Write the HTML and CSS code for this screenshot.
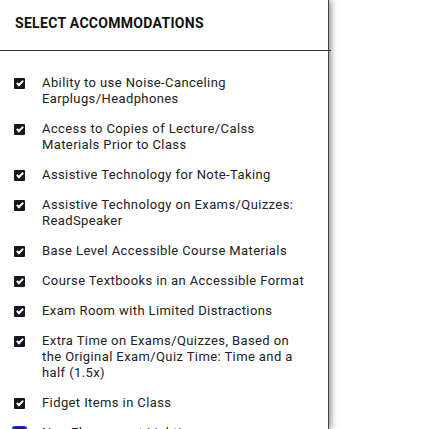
FILE: index.html
```html
<!DOCTYPE html>
<html>
<head>
<meta charset="utf-8">
<title>Select Accommodations</title>
<link rel="stylesheet" href="styles.css">
</head>
<body>
<div class="acc-panel">
	<div class="acc-header">SELECT ACCOMMODATIONS</div>
	<ul class="acc-list">
		<li class="acc-item"><input type="checkbox" class="acc-check" checked /><span>Ability to use Noise-Canceling Earplugs/Headphones</span></li>
		<li class="acc-item"><input type="checkbox" class="acc-check" checked /><span>Access to Copies of Lecture/Calss Materials Prior to Class</span></li>
		<li class="acc-item"><input type="checkbox" class="acc-check" checked /><span>Assistive Technology for Note-Taking</span></li>
		<li class="acc-item"><input type="checkbox" class="acc-check" checked /><span>Assistive Technology on Exams/Quizzes: ReadSpeaker</span></li>
		<li class="acc-item"><input type="checkbox" class="acc-check" checked /><span>Base Level Accessible Course Materials</span></li>
		<li class="acc-item"><input type="checkbox" class="acc-check" checked /><span>Course Textbooks in an Accessible Format</span></li>
		<li class="acc-item"><input type="checkbox" class="acc-check" checked /><span>Exam Room with Limited Distractions</span></li>
		<li class="acc-item"><input type="checkbox" class="acc-check" checked /><span>Extra Time on Exams/Quizzes, Based on the Original Exam/Quiz Time: Time and a half (1.5x)</span></li>
		<li class="acc-item"><input type="checkbox" class="acc-check" checked /><span>Fidget Items in Class</span></li>
		<li class="acc-item"><input type="checkbox" class="acc-check focus" checked /><span>Non-Fluorescent Lighting</span></li>
	</ul>
</div>
</body>
</html>
```

FILE: styles.css
```css
*{margin: 0;padding: 0;}
html,body{height: 100%;}
body{font: 13px Roboto,"Liberation Sans",sans-serif;letter-spacing: 0.4px;color: #222;background-color: #fff;overflow: hidden;}
.acc-panel{width: 329px;height: 100%;box-sizing: border-box;border-right: 1px solid #444;background-color: #fff;box-shadow: 2px 0 6px rgba(0,0,0,0.45);}
.acc-header{height: 51px;box-sizing: border-box;border-bottom: 1px solid #333;padding: 15px 0 0 15px;font-size: 14px;font-weight: bold;letter-spacing: 0.3px;line-height: 16px;color: #111;margin-right: -3px;}
.acc-list{list-style: none;padding: 24px 20px 0 14px;display: flex;flex-direction: column;gap: 14px;}
.acc-item{display: flex;align-items: flex-start;line-height: 16px;}
.acc-check{appearance: none;-webkit-appearance: none;width: 11px;height: 11px;margin: 3px 17px 0 0;flex: none;background-color: #15151f;border-radius: 1px;position: relative;}
.acc-check:checked:after{content: "";position: absolute;left: 4px;top: 1px;width: 2px;height: 5px;border: solid #fff;border-width: 0 2px 2px 0;transform: rotate(45deg);}
.acc-check.focus{outline: 2px solid #1a1aff;outline-offset: 0;}
```
